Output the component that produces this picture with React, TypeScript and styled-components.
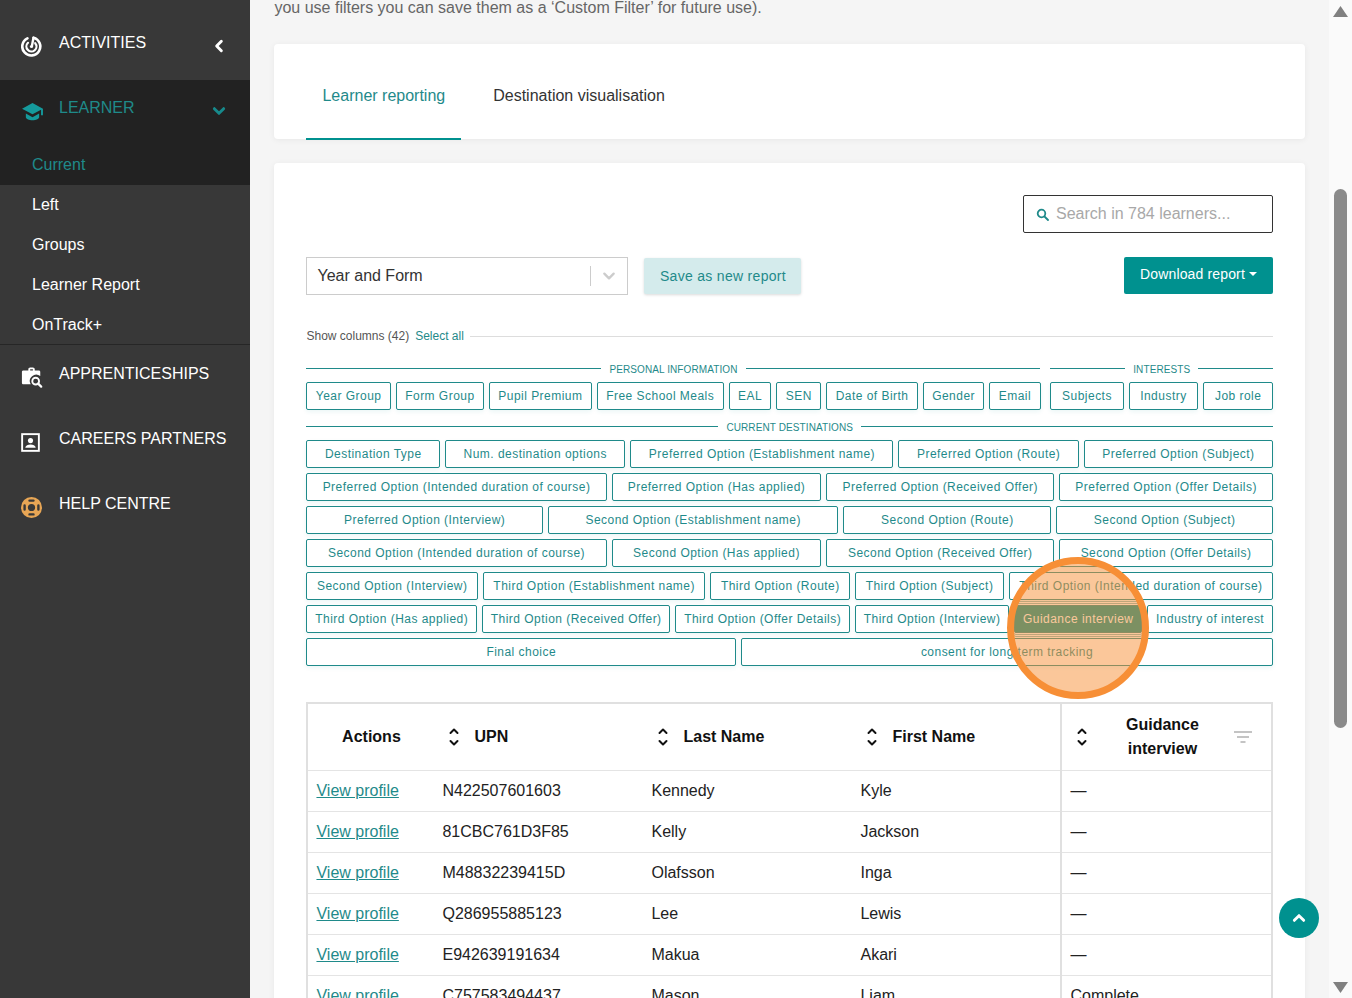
import React from "react";
import styled, { createGlobalStyle } from "styled-components";

const TEAL = "#00918f";
const TEAL_TEXT = "#1f8a8a";

const GlobalStyle = createGlobalStyle`
  html, body {
    margin: 0;
    height: 100%;
    overflow: hidden;
    font-family: "Liberation Sans", Arial, sans-serif;
  }
  * { box-sizing: border-box; }
`;

const Page = styled.div`
  display: flex;
  width: 1352px;
  height: 998px;
  overflow: hidden;
  background: #f5f5f5;
`;

/* Sidebar */

const Sidebar = styled.nav`
  flex: 0 0 250px;
  background: #383838;
  color: #ffffff;
`;

const NavItem = styled.div<{ $active?: boolean }>`
  display: flex;
  align-items: center;
  height: 65px;
  padding: 0 24px 8px 21px;
  font-size: 16px;
  white-space: nowrap;
  color: ${(props) => (props.$active ? TEAL_TEXT : "#ffffff")};
`;

const TopNavItem = styled(NavItem)`
  height: 80px;
  padding-top: 5px;
  padding-bottom: 0;
`;

const LearnerHead = styled(NavItem)`
  height: 64px;
  padding-top: 0;
  padding-bottom: 9px;
`;

const NavIcon = styled.span`
  flex: 0 0 38px;
  display: flex;
  align-items: center;
  padding-top: 7px;
`;

const NavLabel = styled.span`
  flex: 1;
`;

const ChevronSlot = styled.span`
  display: flex;
  padding-top: 6px;
`;

const LearnerGroup = styled.div`
  background: #222222;
  height: 105px;
`;

const SubItem = styled.div<{ $active?: boolean }>`
  display: flex;
  align-items: center;
  height: 40px;
  padding: 1px 0 0 32px;
  font-size: 16px;
  color: ${(props) => (props.$active ? TEAL_TEXT : "#ffffff")};
`;

const SubList = styled.div`
  margin-top: -1px;
  height: 161px;
  border-bottom: 1px solid #262626;
`;

/* Main column */

const Main = styled.main`
  flex: 1;
  min-width: 0;
  height: 998px;
  overflow: hidden;
  padding: 0 24px;
`;

const IntroLine = styled.p`
  margin: 0 0 28px;
  height: 16px;
  line-height: 16px;
  font-size: 16px;
  color: #666666;
  white-space: nowrap;
`;

const Card = styled.section`
  background: #ffffff;
  border-radius: 4px;
  box-shadow: 0 1px 6px rgba(0, 0, 0, 0.06);
`;

const TabsCard = styled(Card)`
  display: flex;
  gap: 16px;
  height: 95px;
  padding: 0 32px;
  margin-bottom: 24px;
`;

const Tab = styled.div<{ $active?: boolean }>`
  display: flex;
  align-items: center;
  height: 96px;
  padding: 10px 16px 0;
  font-size: 16px;
  color: ${(props) => (props.$active ? TEAL_TEXT : "#333333")};
  border-bottom: 2px solid ${(props) => (props.$active ? TEAL : "transparent")};
`;

const ReportCard = styled(Card)`
  padding: 32px;
  min-height: 900px;
`;

const SearchRow = styled.div`
  display: flex;
  justify-content: flex-end;
  margin-bottom: 24px;
`;

const SearchBox = styled.div`
  display: flex;
  align-items: center;
  gap: 7px;
  width: 250px;
  height: 38px;
  padding: 0 12px;
  border: 1px solid #333333;
  border-radius: 2px;
  font-size: 16px;
  color: #a8a8a8;
`;

const ControlsRow = styled.div`
  display: flex;
  align-items: center;
  height: 38px;
  margin-bottom: 33px;
`;

const SelectBox = styled.div`
  display: flex;
  align-items: center;
  width: 322px;
  height: 38px;
  padding-left: 10px;
  border: 1px solid #cccccc;
  font-size: 16px;
  color: #333333;
`;

const SelectValue = styled.span`
  flex: 1;
`;

const SelectDivider = styled.span`
  width: 1px;
  height: 20px;
  background: #cccccc;
`;

const SelectArrow = styled.span`
  display: flex;
  justify-content: center;
  width: 36px;
`;

const SaveButton = styled.div`
  display: flex;
  align-items: center;
  justify-content: center;
  width: 157px;
  height: 36px;
  margin-left: 16px;
  border-radius: 2px;
  background: #d4ebec;
  color: ${TEAL_TEXT};
  font-size: 14px;
  letter-spacing: 0.3px;
  box-shadow: 0 1px 3px rgba(0, 0, 0, 0.15);
`;

const DownloadButton = styled.div`
  display: flex;
  align-items: center;
  justify-content: center;
  gap: 4px;
  align-self: flex-start;
  width: 149px;
  height: 37px;
  margin-left: auto;
  padding-bottom: 3px;
  border-radius: 2px;
  background: ${TEAL};
  color: #ffffff;
  font-size: 14px;
  letter-spacing: 0.15px;
`;

const Caret = styled.span`
  width: 0;
  height: 0;
  border-left: 4px solid transparent;
  border-right: 4px solid transparent;
  border-top: 4px solid #ffffff;
`;

const ColumnsHead = styled.div`
  display: flex;
  align-items: center;
  height: 16px;
  margin-bottom: 18px;
  font-size: 12px;
  color: #555555;
`;

const SelectAll = styled.span`
  margin-left: 6px;
  color: ${TEAL_TEXT};
`;

const HeadRule = styled.span`
  flex: 1;
  height: 1px;
  margin-left: 6px;
  background: #dddddd;
`;

const GroupsRow = styled.div`
  display: flex;
  gap: 10px;
  margin-bottom: 5px;
`;

const ChipGroup = styled.div<{ $flex?: string }>`
  flex: ${(props) => props.$flex ?? "1"};
  min-width: 0;
`;

const GroupTitle = styled.div`
  display: flex;
  align-items: center;
  gap: 8px;
  height: 14px;
  margin-bottom: 6px;
  font-size: 10px;
  letter-spacing: 0.1px;
  text-transform: uppercase;
  color: ${TEAL_TEXT};

  &::before,
  &::after {
    content: "";
    flex: 1;
    height: 1px;
    margin-top: -1px;
    background: ${TEAL_TEXT};
  }
`;

const ChipRow = styled.div`
  display: flex;
  gap: 5px;
  margin-bottom: 5px;
`;

const selectedLines = [
  "0 -1px 0 #ffffff",
  "0 -2px 0 #87bdbe",
  "0 -3px 0 #ffffff",
  "0 -4px 0 #87bdbe",
  "0 1px 0 #ffffff",
  "0 2px 0 #87bdbe",
  "0 3px 0 #ffffff",
  "0 4px 0 #87bdbe",
].join(", ");

const Chip = styled.div<{ $on?: boolean }>`
  position: relative;
  flex: 1 1 auto;
  display: flex;
  align-items: center;
  justify-content: center;
  height: 28px;
  padding: 0 7px;
  border: 1px solid ${TEAL_TEXT};
  border-radius: 2px;
  font-size: 12px;
  letter-spacing: 0.47px;
  white-space: nowrap;
  background: ${(props) => (props.$on ? TEAL : "#ffffff")};
  color: ${(props) => (props.$on ? "#ffffff" : TEAL_TEXT)};
  box-shadow: ${(props) => (props.$on ? selectedLines : "0 2px 4px rgba(0, 145, 143, 0.08)")};
`;

const Spotlight = styled.span`
  position: absolute;
  left: 50%;
  top: 50%;
  width: 142px;
  height: 142px;
  margin: -62px 0 0 -71px;
  border-radius: 50%;
  border: 7px solid #f78f36;
  background: rgba(247, 143, 54, 0.5);
  z-index: 2;
`;

/* Table */

const TableFrame = styled.div`
  margin-top: 36px;
  border: 2px solid #e0e0e0;
  border-bottom: none;
`;

const DataTable = styled.table`
  width: 963px;
  table-layout: fixed;
  border-collapse: collapse;
  font-size: 16px;
  color: #222222;
`;

const HeadCell = styled.th<{ $w: number; $split?: boolean }>`
  width: ${(props) => props.$w}px;
  height: 66px;
  padding: 0;
  font-size: 16px;
  color: #111111;
  border-bottom: 1px solid #e4e4e4;
  border-left: ${(props) => (props.$split ? "2px solid #e0e0e0" : "none")};
`;

const HeadInner = styled.div`
  display: flex;
  align-items: center;
  gap: 14px;
  padding-left: 14px;
`;

const GuidanceInner = styled.div`
  display: flex;
  align-items: center;
  padding: 0 18px 0 14px;
`;

const GuidanceTitle = styled.span`
  flex: 1;
  padding-left: 3px;
  line-height: 24px;
  text-align: center;
`;

const Cell = styled.td<{ $split?: boolean }>`
  height: 41px;
  padding: 0 8px;
  border-bottom: 1px solid #e4e4e4;
  border-left: ${(props) => (props.$split ? "2px solid #e0e0e0" : "none")};
`;

const ProfileLink = styled.a`
  color: #1f8a8a;
  text-decoration: underline;
`;

/* Floating bits */

const BackToTop = styled.div`
  position: absolute;
  left: 1279px;
  top: 898px;
  display: flex;
  align-items: center;
  justify-content: center;
  width: 40px;
  height: 40px;
  border-radius: 50%;
  background: ${TEAL};
`;

const ScrollTrack = styled.div`
  flex: 0 0 23px;
  display: flex;
  flex-direction: column;
  align-items: center;
  height: 998px;
  padding: 6px 0 5px;
  background: #fafafa;
`;

const ScrollThumb = styled.div`
  width: 13px;
  height: 539px;
  margin-top: 172px;
  border-radius: 7px;
  background: #8a8a8a;
`;

const ScrollDown = styled.svg`
  margin-top: auto;
`;

/* Icons */

const ActivitiesIcon = () => (
  <svg width="21" height="21" viewBox="0 0 21 21" fill="none" stroke="#fff" strokeLinecap="round">
    <path d="M6.4 2.300A9 9 0 1 0 12.500 1.700" strokeWidth="2.600" />
    <path d="M7 6.800A5 5 0 1 0 14.200 7.200" strokeWidth="2.200" />
    <path d="M12.500 1.700 11 9.500" strokeWidth="2.400" />
    <circle cx="10.500" cy="10.500" r="1.600" fill="#fff" stroke="none" />
  </svg>
);

const LearnerIcon = () => (
  <svg width="23" height="19" viewBox="0 0 24 20" fill="#159a9c">
    <path d="M12 1 1 7l11 6 9-4.900V14h2V7z" />
    <path d="M5 12.200V16c0 1.600 3.200 3.200 7 3.200s7-1.600 7-3.200v-3.800l-7 3.800z" />
  </svg>
);

const ApprenticeIcon = () => (
  <svg width="22" height="22" viewBox="0 0 24 24">
    <path fill="#fff" d="M8 3.500C8 2.400 8.900 1.500 10 1.500h3c1.100 0 2 .9 2 2V5h4.500c.8 0 1.500.7 1.500 1.500V11a7 7 0 0 0-10.400 9H2.500C1.700 20 1 19.300 1 18.500v-12C1 5.700 1.700 5 2.500 5H8zM10 3.500V5h3V3.500z" />
    <circle cx="16" cy="16.500" r="3.700" fill="none" stroke="#fff" strokeWidth="2" />
    <path d="M18.700 19.200 22 22.500" stroke="#fff" strokeWidth="2.400" strokeLinecap="round" />
  </svg>
);

const PartnersIcon = () => (
  <svg width="19" height="19" viewBox="0 0 20 20" fill="none">
    <rect x="1.200" y="1.200" width="17.600" height="17.600" stroke="#fff" strokeWidth="2" />
    <circle cx="10" cy="8" r="2.700" fill="#fff" />
    <path d="M4.500 15.500c.4-2.400 2.800-3.500 5.500-3.500s5.100 1.100 5.500 3.500z" fill="#fff" />
  </svg>
);

const HelpIcon = () => (
  <svg width="21" height="21" viewBox="0 0 21 21" fill="none">
    <circle cx="10.500" cy="10.500" r="10.500" fill="#e8a655" />
    <circle cx="10.500" cy="10.500" r="3.600" fill="#383838" />
    <path d="M8.500 3.600h4M8.500 17.400h4M3.600 8.500v4M17.400 8.500v4" stroke="#383838" strokeWidth="2.400" strokeLinecap="round" />
  </svg>
);

const Chevron = ({ dir, color, size = 14, width = 2.500 }: { dir: "up" | "down" | "left"; color: string; size?: number; width?: number }) => {
  const d = dir === "up" ? "M2 8l4-4 4 4" : dir === "down" ? "M2 4l4 4 4-4" : "M8 2 4 6l4 4";
  return (
    <svg width={size} height={size} viewBox="0 0 12 12" fill="none" stroke={color} strokeWidth={width} strokeLinecap="round" strokeLinejoin="round">
      <path d={d} />
    </svg>
  );
};

const SortIcon = () => (
  <svg width="12" height="20" viewBox="0 0 12 20" fill="none" stroke="#111" strokeWidth="2" strokeLinecap="round" strokeLinejoin="round">
    <path d="M2.500 6 6 2.500 9.500 6" />
    <path d="M2.500 14 6 17.500 9.500 14" />
  </svg>
);

const FilterIcon = () => (
  <svg width="20" height="14" viewBox="0 0 20 14" fill="none" stroke="#c4c4c4" strokeWidth="1.800">
    <path d="M1 2h18M4 7h12M7.500 12h5" />
  </svg>
);

const SearchIcon = () => (
  <svg width="13" height="13" viewBox="0 0 13 13" fill="none" stroke="#1f8a8a" strokeWidth="1.800" strokeLinecap="round">
    <circle cx="5.500" cy="5.500" r="3.800" />
    <path d="M8.500 8.500 12 12" />
  </svg>
);

/* Data */

const PERSONAL = ["Year Group", "Form Group", "Pupil Premium", "Free School Meals", "EAL", "SEN", "Date of Birth", "Gender", "Email"];
const INTERESTS = ["Subjects", "Industry", "Job role"];
const DESTINATIONS = [
  ["Destination Type", "Num. destination options", "Preferred Option (Establishment name)", "Preferred Option (Route)", "Preferred Option (Subject)"],
  ["Preferred Option (Intended duration of course)", "Preferred Option (Has applied)", "Preferred Option (Received Offer)", "Preferred Option (Offer Details)"],
  ["Preferred Option (Interview)", "Second Option (Establishment name)", "Second Option (Route)", "Second Option (Subject)"],
  ["Second Option (Intended duration of course)", "Second Option (Has applied)", "Second Option (Received Offer)", "Second Option (Offer Details)"],
  ["Second Option (Interview)", "Third Option (Establishment name)", "Third Option (Route)", "Third Option (Subject)", "Third Option (Intended duration of course)"],
  ["Third Option (Has applied)", "Third Option (Received Offer)", "Third Option (Offer Details)", "Third Option (Interview)", "Guidance interview", "Industry of interest"],
  ["Final choice", "consent for long term tracking"],
];
const LEARNERS = [
  ["N422507601603", "Kennedy", "Kyle", "—"],
  ["81CBC761D3F85", "Kelly", "Jackson", "—"],
  ["M48832239415D", "Olafsson", "Inga", "—"],
  ["Q286955885123", "Lee", "Lewis", "—"],
  ["E942639191634", "Makua", "Akari", "—"],
  ["C757583494437", "Mason", "Liam", "Complete"],
];

const SortableHead = ({ title, w }: { title: string; w: number }) => (
  <HeadCell $w={w}>
    <HeadInner>
      <SortIcon />
      {title}
    </HeadInner>
  </HeadCell>
);

const App = () => (
  <Page>
    <GlobalStyle />
    <Sidebar>
      <TopNavItem>
        <NavIcon><ActivitiesIcon /></NavIcon>
        <NavLabel>ACTIVITIES</NavLabel>
        <ChevronSlot><Chevron dir="left" color="#ffffff" /></ChevronSlot>
      </TopNavItem>
      <LearnerGroup>
        <LearnerHead $active>
          <NavIcon><LearnerIcon /></NavIcon>
          <NavLabel>LEARNER</NavLabel>
          <ChevronSlot><Chevron dir="down" color="#178a8c" /></ChevronSlot>
        </LearnerHead>
        <SubItem $active>Current</SubItem>
      </LearnerGroup>
      <SubList>
        <SubItem>Left</SubItem>
        <SubItem>Groups</SubItem>
        <SubItem>Learner Report</SubItem>
        <SubItem>OnTrack+</SubItem>
      </SubList>
      <NavItem>
        <NavIcon><ApprenticeIcon /></NavIcon>
        <NavLabel>APPRENTICESHIPS</NavLabel>
      </NavItem>
      <NavItem>
        <NavIcon><PartnersIcon /></NavIcon>
        <NavLabel>CAREERS PARTNERS</NavLabel>
      </NavItem>
      <NavItem>
        <NavIcon><HelpIcon /></NavIcon>
        <NavLabel>HELP CENTRE</NavLabel>
      </NavItem>
    </Sidebar>

    <Main>
      <IntroLine>you use filters you can save them as a ‘Custom Filter’ for future use).</IntroLine>
      <TabsCard>
        <Tab $active>Learner reporting</Tab>
        <Tab>Destination visualisation</Tab>
      </TabsCard>
      <ReportCard>
        <SearchRow>
          <SearchBox>
            <SearchIcon />
            Search in 784 learners...
          </SearchBox>
        </SearchRow>
        <ControlsRow>
          <SelectBox>
            <SelectValue>Year and Form</SelectValue>
            <SelectDivider />
            <SelectArrow><Chevron dir="down" color="#cccccc" width={2} /></SelectArrow>
          </SelectBox>
          <SaveButton>Save as new report</SaveButton>
          <DownloadButton>Download report <Caret /></DownloadButton>
        </ControlsRow>
        <ColumnsHead>
          Show columns (42)
          <SelectAll>Select all</SelectAll>
          <HeadRule />
        </ColumnsHead>
        <GroupsRow>
          <ChipGroup $flex="0 0 734px">
            <GroupTitle>Personal information</GroupTitle>
            <ChipRow>
              {PERSONAL.map((name) => <Chip key={name}>{name}</Chip>)}
            </ChipRow>
          </ChipGroup>
          <ChipGroup>
            <GroupTitle>Interests</GroupTitle>
            <ChipRow>
              {INTERESTS.map((name) => <Chip key={name}>{name}</Chip>)}
            </ChipRow>
          </ChipGroup>
        </GroupsRow>
        <ChipGroup>
          <GroupTitle>Current destinations</GroupTitle>
          {DESTINATIONS.map((row) => (
            <ChipRow key={row[0]}>
              {row.map((name) => (
                <Chip key={name} $on={name === "Guidance interview"}>
                  {name}
                  {name === "Guidance interview" && <Spotlight />}
                </Chip>
              ))}
            </ChipRow>
          ))}
        </ChipGroup>
        <TableFrame>
          <DataTable>
            <thead>
              <tr>
                <HeadCell $w={126}>Actions</HeadCell>
                <SortableHead title="UPN" w={209} />
                <SortableHead title="Last Name" w={209} />
                <SortableHead title="First Name" w={209} />
                <HeadCell $w={210} $split>
                  <GuidanceInner>
                    <SortIcon />
                    <GuidanceTitle>Guidance<br />interview</GuidanceTitle>
                    <FilterIcon />
                  </GuidanceInner>
                </HeadCell>
              </tr>
            </thead>
            <tbody>
              {LEARNERS.map(([upn, last, first, guidance]) => (
                <tr key={upn}>
                  <Cell><ProfileLink href="#">View profile</ProfileLink></Cell>
                  <Cell>{upn}</Cell>
                  <Cell>{last}</Cell>
                  <Cell>{first}</Cell>
                  <Cell $split>{guidance}</Cell>
                </tr>
              ))}
            </tbody>
          </DataTable>
        </TableFrame>
      </ReportCard>
    </Main>

    <ScrollTrack>
      <svg width="15" height="11" viewBox="0 0 15 11"><path d="M7.500 0 15 11H0z" fill="#808080" /></svg>
      <ScrollThumb />
      <ScrollDown width="15" height="11" viewBox="0 0 15 11"><path d="M7.500 11 0 0h15z" fill="#808080" /></ScrollDown>
    </ScrollTrack>

    <BackToTop><Chevron dir="up" color="#ffffff" /></BackToTop>
  </Page>
);

export default App;
